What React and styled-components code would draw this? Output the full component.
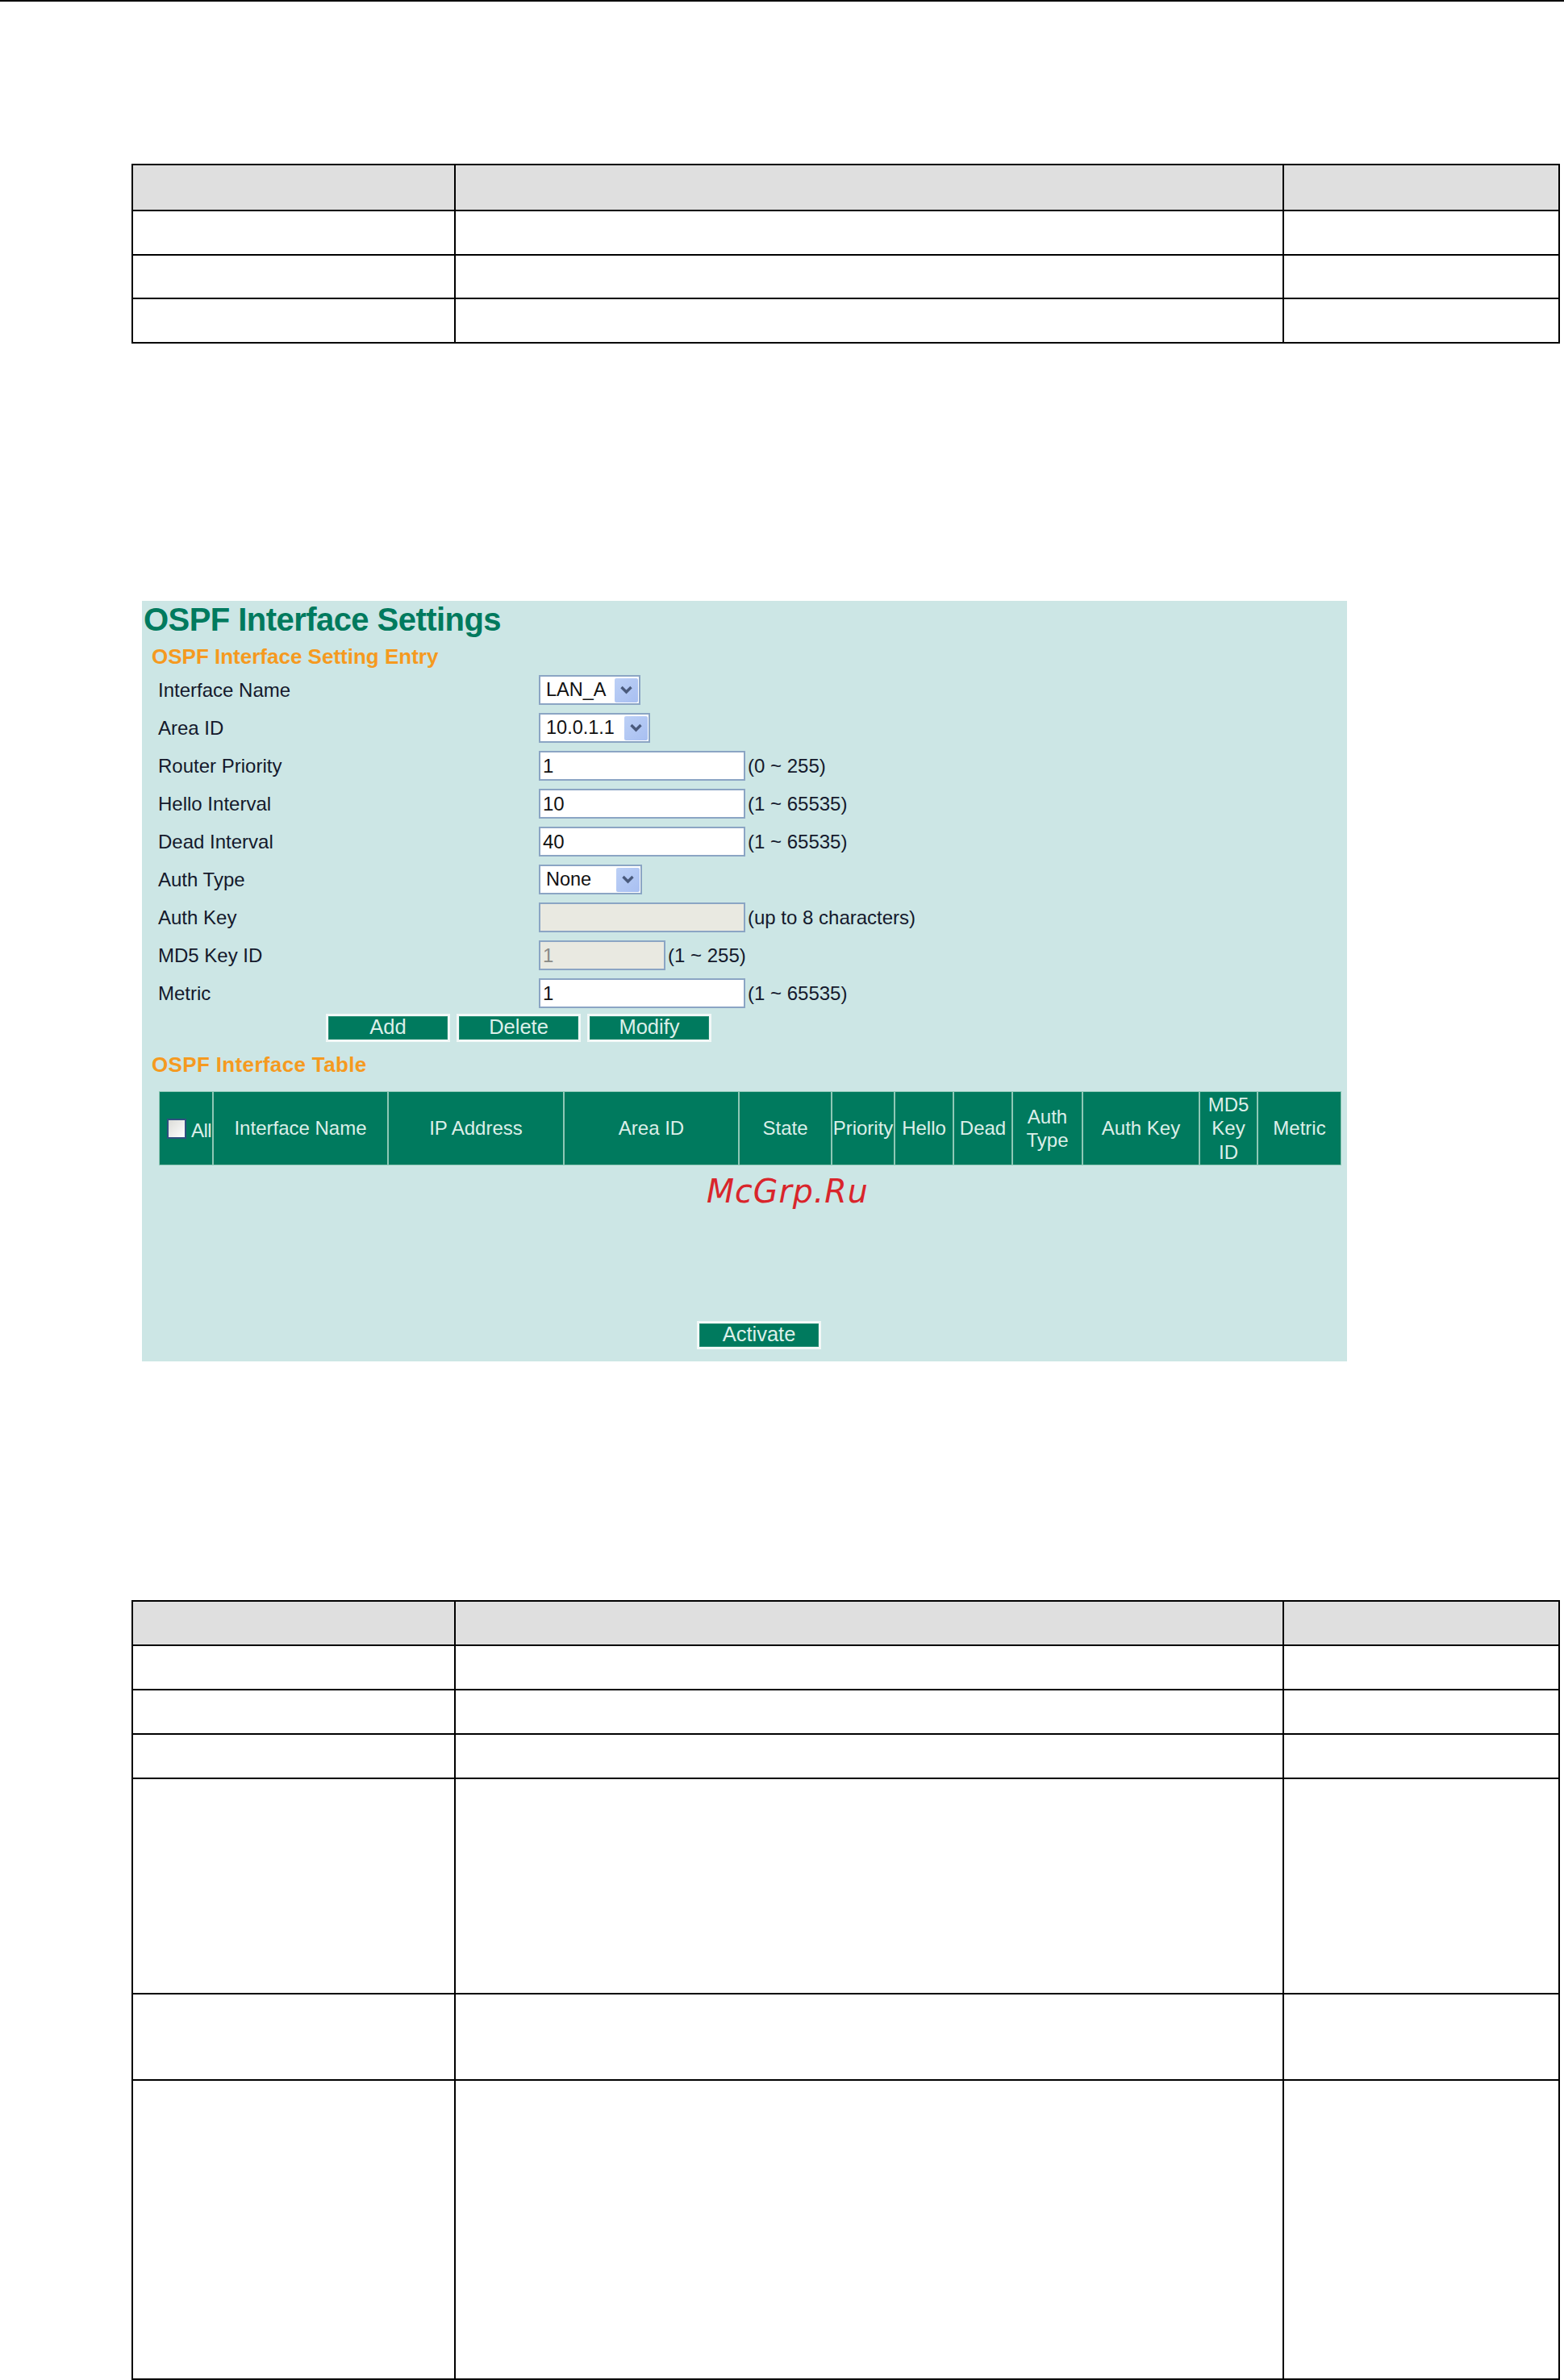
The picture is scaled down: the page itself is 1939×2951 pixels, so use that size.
import React from 'react';
import styled, { createGlobalStyle } from 'styled-components';

const Global = createGlobalStyle`
  html, body { margin: 0; padding: 0; background: #fff; }
  body { font-family: "Liberation Sans", Arial, sans-serif; color: #111; }
`;

const Page = styled.div`
  width: 1939px;
  height: 2951px;
  overflow: hidden;
  background: #fff;
  display: flex;
  flex-direction: column;
`;
const TopRule = styled.div`
  height: 2px;
  background: #000;
  flex: none;
`;
const SpecGrid = styled.div`
  width: 1771px;
  flex: none;
  margin: ${p => p.$top}px 0 0 163px;
  display: grid;
  grid-template-columns: 400px 1027px 340px;
  border-right: 2px solid #000;
  border-left: 2px solid #000;
  border-bottom: 2px solid #000;
  box-sizing: border-box;
`;
const SpecCell = styled.div`
  height: ${p => p.$h}px;
  box-sizing: border-box;
  border-top: 2px solid #000;
  border-right: ${p => (p.$col === 2 ? '0' : '2px')} solid #000;
  background: ${p => (p.$head ? '#dfdfdf' : '#fff')};
`;
const Panel = styled.section`
  width: 1494px;
  height: 943px;
  margin: 319px 0 0 176px;
  background: #cce6e5;
  flex: none;
  box-sizing: border-box;
  display: flex;
  flex-direction: column;
  position: relative;
`;
const Title = styled.h1`
  margin: 0 0 0 2px;
  font: bold 40px/46px "Liberation Sans", Arial, sans-serif;
  color: #007a5e;
  letter-spacing: -0.55px;
`;
const Section = styled.h2`
  margin: ${p => p.$top}px 0 0 12px;
  font: bold 26px/32px "Liberation Sans", Arial, sans-serif;
  color: #f59a1f;
  letter-spacing: ${p => p.$track}px;
`;
const Form = styled.div`
  display: flex;
  flex-direction: column;
  margin: 2px 0 0 20px;
`;
const Row = styled.div`
  display: flex;
  align-items: center;
  height: 47px;
`;
const Label = styled.label`
  width: 472px;
  flex: none;
  font-size: 24px;
  color: #14192c;
`;
const Hint = styled.span`
  margin-left: 3px;
  font-size: 24px;
  color: #14192c;
`;
const Field = styled.div`
  width: ${p => p.$w}px;
  height: 37px;
  box-sizing: border-box;
  border: 2px solid #8ba5c4;
  background: ${p => (p.$off ? '#e9e9e1' : '#fff')};
  color: ${p => (p.$off ? '#8a8a86' : '#111')};
  font-size: 24px;
  line-height: 33px;
  padding-left: 3px;
`;
const Select = styled.div`
  width: ${p => p.$w}px;
  height: 37px;
  box-sizing: border-box;
  border: 2px solid #8ba5c4;
  background: #fff;
  display: flex;
  align-items: center;
  justify-content: space-between;
  padding: 1px 1px 1px 7px;
  font-size: 23.5px;
  color: #111;
`;
const Arrow = styled.span`
  width: 29px;
  height: 30px;
  flex: none;
  display: flex;
  align-items: center;
  justify-content: center;
  border-radius: 2px;
  background: linear-gradient(135deg, #bcd0f6, #a8bff1);
`;
const ButtonRow = styled.div`
  display: flex;
  gap: 8px;
  margin: ${p => p.$top}px 0 0 ${p => p.$left}px;
`;
const Button = styled.button`
  width: 154px;
  height: 35px;
  box-sizing: border-box;
  padding: 0 0 2px;
  border: 3px solid #f2f8f7;
  background: #007a5e;
  box-shadow: inset 0 0 0 1px #1f8a70;
  color: #dcefe9;
  font: 25.5px/1 "Liberation Sans", Arial, sans-serif;
`;
const HeadTable = styled.div`
  display: grid;
  grid-template-columns: 65px 215px 216px 215px 113px 76px 71px 71px 85px 143px 70px 102px;
  column-gap: 2px;
  width: 1466px;
  height: 92px;
  box-sizing: border-box;
  padding: 1px;
  background: #8fc8b6;
  margin: 17px 0 0 21px;
`;
const HeadCell = styled.div`
  background: #007a5e;
  color: #dcefe9;
  font-size: 24px;
  line-height: 29.5px;
  white-space: nowrap;
  display: flex;
  align-items: center;
  justify-content: center;
  text-align: center;
`;
const AllCell = styled(HeadCell)`
  justify-content: flex-start;
  padding-left: 9px;
`;
const CheckBox = styled.span`
  width: 24px;
  height: 25px;
  flex: none;
  box-sizing: border-box;
  border: 2px solid #2f4f7f;
  background: linear-gradient(135deg, #dcdcd8, #fff);
  margin-right: 6px;
`;
const CheckLabel = styled.span`
  padding-top: 6px;
  letter-spacing: -0.6px;
`;
const Watermark = styled.div`
  position: absolute;
  left: 700px;
  top: 708px;
  font: oblique 41px/48px "DejaVu Sans", sans-serif;
  color: #d9252b;
  transform: scaleX(0.965);
  transform-origin: left center;
  letter-spacing: 1px;
`;
const ActivateRow = styled(ButtonRow)`
  margin-top: auto;
  margin-bottom: 15px;
`;

const table1 = [
  { h: 57, head: true },
  { h: 55 },
  { h: 54 },
  { h: 55 },
];
const table2 = [
  { h: 55, head: true },
  { h: 55 },
  { h: 55 },
  { h: 55 },
  { h: 267 },
  { h: 107 },
  { h: 371 },
];

const Spec = ({ rows, top }) => (
  <SpecGrid $top={top}>
    {rows.flatMap((r, i) =>
      [0, 1, 2].map(c => <SpecCell key={`${i}-${c}`} $col={c} $h={r.h} $head={r.head} />)
    )}
  </SpecGrid>
);

const Chevron = () => (
  <svg width="17" height="13" viewBox="0 0 17 13">
    <path d="M2.5 3 L8.5 9 L14.5 3" fill="none" stroke="#4a5a7c" strokeWidth="3.4" />
  </svg>
);

const Pick = ({ w, value }) => (
  <Select $w={w}>
    <span>{value}</span>
    <Arrow><Chevron /></Arrow>
  </Select>
);

const heads = [
  null,
  'Interface Name', 'IP Address', 'Area ID', 'State', 'Priority', 'Hello', 'Dead',
  <>Auth<br />Type</>, 'Auth Key', <>MD5<br />Key<br />ID</>, 'Metric',
];

export default function App() {
  return (
    <Page>
      <Global />
      <TopRule />
      <Spec rows={table1} top={201} />
      <Panel>
        <Title>OSPF Interface Settings</Title>
        <Section $top={7} $track={0}>OSPF Interface Setting Entry</Section>
        <Form>
          <Row><Label>Interface Name</Label><Pick w={126} value="LAN_A" /></Row>
          <Row><Label>Area ID</Label><Pick w={138} value="10.0.1.1" /></Row>
          <Row><Label>Router Priority</Label><Field $w={256}>1</Field><Hint>(0 ~ 255)</Hint></Row>
          <Row><Label>Hello Interval</Label><Field $w={256}>10</Field><Hint>(1 ~ 65535)</Hint></Row>
          <Row><Label>Dead Interval</Label><Field $w={256}>40</Field><Hint>(1 ~ 65535)</Hint></Row>
          <Row><Label>Auth Type</Label><Pick w={128} value="None" /></Row>
          <Row><Label>Auth Key</Label><Field $w={256} $off /><Hint>(up to 8 characters)</Hint></Row>
          <Row><Label>MD5 Key ID</Label><Field $w={157} $off>1</Field><Hint>(1 ~ 255)</Hint></Row>
          <Row><Label>Metric</Label><Field $w={256}>1</Field><Hint>(1 ~ 65535)</Hint></Row>
        </Form>
        <ButtonRow $top={2} $left={228}>
          <Button>Add</Button><Button>Delete</Button><Button>Modify</Button>
        </ButtonRow>
        <Section $top={12} $track={0.35}>OSPF Interface Table</Section>
        <HeadTable>
          {heads.map((h, i) =>
            h === null ? (
              <AllCell key={i}><CheckBox /><CheckLabel>All</CheckLabel></AllCell>
            ) : (
              <HeadCell key={i}>{h}</HeadCell>
            )
          )}
        </HeadTable>
        <Watermark>McGrp.Ru</Watermark>
        <ActivateRow $top={0} $left={688}><Button>Activate</Button></ActivateRow>
      </Panel>
      <Spec rows={table2} top={296} />
    </Page>
  );
}
